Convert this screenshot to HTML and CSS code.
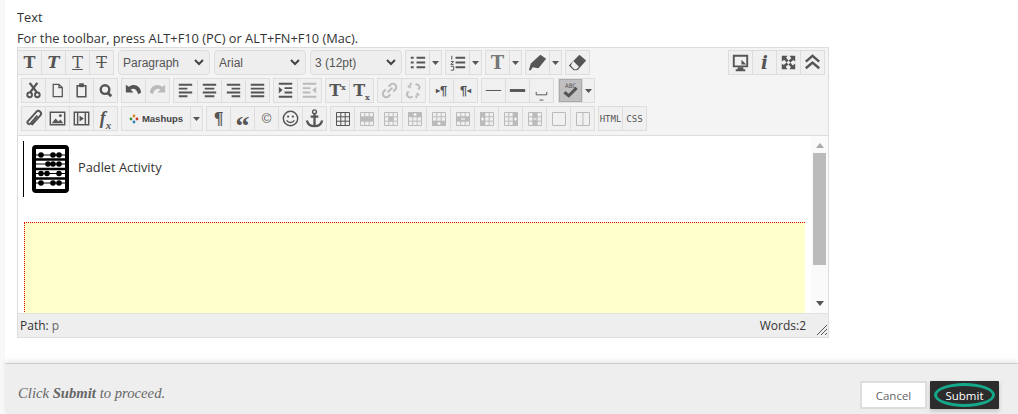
FILE: index.html
```html
<!DOCTYPE html>
<html lang="en">
<head>
<meta charset="utf-8">
<title>Text editor</title>
<link rel="stylesheet" href="styles.css">
</head>
<body>
<svg class="sprite" width="0" height="0" aria-hidden="true">
  <defs>
    <symbol id="grid" viewBox="0 0 16 16"><path d="M1.500 1.500h13v13h-13zM1.500 5.800h13M1.500 10.200h13M5.800 1.500v13M10.200 1.500v13" fill="none" stroke="currentColor"/></symbol>
    <symbol id="caret" viewBox="0 0 7 4"><path d="M0 0h7L3.500 4z" fill="currentColor"/></symbol>
    <symbol id="chev" viewBox="0 0 10 7"><path d="M1 1l4 4 4-4" fill="none" stroke="currentColor" stroke-width="2"/></symbol>
  </defs>
</svg>
<main class="main">
  <p class="label">Text</p>
  <p class="hint">For the toolbar, press ALT+F10 (PC) or ALT+FN+F10 (Mac).</p>
  <section class="editor">
    <div class="toolbar">
      <div class="row row-first">
        <div class="group group-start">
          <span class="cell glyph bold">T</span>
          <span class="cell glyph bold ital">T</span>
          <span class="cell glyph uline">T</span>
          <span class="cell glyph strike">T</span>
        </div>
        <div class="select"><span>Paragraph</span><svg class="chev"><use href="#chev"/></svg></div>
        <div class="select"><span>Arial</span><svg class="chev"><use href="#chev"/></svg></div>
        <div class="select"><span>3 (12pt)</span><svg class="chev"><use href="#chev"/></svg></div>
        <div class="group">
          <span class="cell"><svg class="ico" viewBox="0 0 24 24"><path d="M5 7h3M11 7h9M5 12h3M11 12h9M5 17h3M11 17h9" stroke="currentColor" stroke-width="2"/></svg></span>
          <span class="cell caret"><svg class="car"><use href="#caret"/></svg></span>
        </div>
        <div class="group">
          <span class="cell"><svg class="ico" viewBox="0 0 24 24"><path d="M10 7h10M10 12h10M10 17h10" stroke="currentColor" stroke-width="2"/><path d="M6 5v4M5 11h3l-3 3h3M5 16h3v4H5" fill="none" stroke="currentColor"/></svg></span>
          <span class="cell caret"><svg class="car"><use href="#caret"/></svg></span>
        </div>
        <div class="group">
          <span class="cell glyph bold big muted">T</span>
          <span class="cell caret"><svg class="car"><use href="#caret"/></svg></span>
        </div>
        <div class="group">
          <span class="cell"><svg class="ico" viewBox="0 0 24 24"><path d="M15 4l6 4-8 10-6-1-2 3H3l2-7z" fill="currentColor"/></svg></span>
          <span class="cell caret"><svg class="car"><use href="#caret"/></svg></span>
        </div>
        <div class="group">
          <span class="cell"><svg class="ico" viewBox="0 0 24 24"><path d="M14 4l7 6-9 10H8l-5-5z" fill="currentColor"/><path d="M7.500 10.500l6 6-2.500 2.500H8.500L5 15z" fill="#f0f0f0"/></svg></span>
        </div>
        <div class="group group-end">
          <span class="cell"><svg class="ico" viewBox="0 0 24 24"><path d="M5 5h14v11H5z" fill="none" stroke="currentColor" stroke-width="2"/><path d="M13 9l5 5h-5zM9 17h6v2h2v2H7v-2h2z" fill="currentColor"/></svg></span>
          <span class="cell glyph info">i</span>
          <span class="cell"><svg class="ico" viewBox="0 0 24 24"><path d="M5 5h6L9.500 7 12 10l-2 2-2.500-3L5 11zM19 5v6L17 9.500 14 12l-2-2 3-2.500L13 5zM5 19v-6L7 14.500 10 12l2 2-3 2.500L11 19zM19 19h-6L14.500 17 12 14l2-2 2.500 3L19 13z" fill="currentColor"/></svg></span>
          <span class="cell"><svg class="ico" viewBox="0 0 24 24"><path d="M5 11l7-6 7 6M5 18l7-6 7 6" fill="none" stroke="currentColor" stroke-width="2.500"/></svg></span>
        </div>
      </div>
      <div class="row">
        <div class="group">
          <span class="cell"><svg class="ico" viewBox="0 0 24 24"><path d="M8 4l7.500 10M16 4L8.500 14" stroke="currentColor" stroke-width="2.400"/><circle cx="8" cy="16.500" r="2.500" fill="none" stroke="currentColor" stroke-width="2"/><circle cx="16" cy="16.500" r="2.500" fill="none" stroke="currentColor" stroke-width="2"/></svg></span>
          <span class="cell"><svg class="ico" viewBox="0 0 24 24"><path d="M7.500 5.500h6l3.500 3.500v9.500H7.500zM13.500 5.500v3.500H17" fill="none" stroke="currentColor" stroke-width="1.300"/></svg></span>
          <span class="cell"><svg class="ico" viewBox="0 0 24 24"><path d="M7.500 7h9v11.500h-9z" fill="none" stroke="currentColor" stroke-width="1.600"/><path d="M9.500 4.500h5v4h-5z" fill="currentColor"/></svg></span>
          <span class="cell"><svg class="ico" viewBox="0 0 24 24"><circle cx="11.500" cy="11" r="4.500" fill="none" stroke="currentColor" stroke-width="2.500"/><path d="M14 14l4 4" stroke="currentColor" stroke-width="3"/></svg></span>
        </div>
        <div class="group">
          <span class="cell"><svg class="ico" viewBox="0 0 24 24"><path d="M4 6v8h8l-3-3c3-2 6-1 8 5l3-2c-1-7-7-10-13-6l-3-2z" fill="currentColor"/></svg></span>
          <span class="cell off"><svg class="ico" viewBox="0 0 24 24"><path d="M20 6v8h-8l3-3c-3-2-6-1-8 5l-3-2c1-7 7-10 13-6l3-2z" fill="currentColor"/></svg></span>
        </div>
        <div class="group">
          <span class="cell"><svg class="ico" viewBox="0 0 24 24"><path d="M5 6h14M5 10h9M5 14h14M5 18h9" stroke="currentColor" stroke-width="2"/></svg></span>
          <span class="cell"><svg class="ico" viewBox="0 0 24 24"><path d="M5 6h14M7 10h10M5 14h14M7 18h10" stroke="currentColor" stroke-width="2"/></svg></span>
          <span class="cell"><svg class="ico" viewBox="0 0 24 24"><path d="M5 6h14M10 10h9M5 14h14M10 18h9" stroke="currentColor" stroke-width="2"/></svg></span>
          <span class="cell"><svg class="ico" viewBox="0 0 24 24"><path d="M5 6h14M5 10h14M5 14h14M5 18h14" stroke="currentColor" stroke-width="2"/></svg></span>
        </div>
        <div class="group">
          <span class="cell"><svg class="ico" viewBox="0 0 24 24"><path d="M5 5h14M11 9.500h8M11 14h8M5 18.500h14" stroke="currentColor" stroke-width="2"/><path d="M5 8l4 3.500L5 15z" fill="currentColor"/></svg></span>
          <span class="cell off"><svg class="ico" viewBox="0 0 24 24"><path d="M5 5h14M5 9.500h8M5 14h8M5 18.500h14" stroke="currentColor" stroke-width="2"/><path d="M19 8l-4 3.500 4 3.500z" fill="currentColor"/></svg></span>
        </div>
        <div class="group">
          <span class="cell glyph bold script"><span>T<sup>x</sup></span></span>
          <span class="cell glyph bold script"><span>T<sub>x</sub></span></span>
        </div>
        <div class="group">
          <span class="cell off"><svg class="ico" viewBox="0 0 24 24"><path d="M10 14l5-5M8 11l-2 2a3.500 3.500 0 0 0 5 5l2-2M11 8l2-2a3.500 3.500 0 0 1 5 5l-2 2" fill="none" stroke="currentColor" stroke-width="2"/></svg></span>
          <span class="cell off"><svg class="ico" viewBox="0 0 24 24"><path d="M7 13l-1 1a3 3 0 0 0 5 4M17 11l1-1a3 3 0 0 0-4-4M6 7l3 2M9 4v3M18 17l-3-2M15 20v-3" fill="none" stroke="currentColor" stroke-width="2"/></svg></span>
        </div>
        <div class="group">
          <span class="cell glyph para"><i class="tri">&#9656;</i>&para;</span>
          <span class="cell glyph para">&para;<i class="tri">&#9666;</i></span>
        </div>
        <div class="group">
          <span class="cell"><svg class="ico" viewBox="0 0 24 24"><path d="M4 12h16" stroke="currentColor"/></svg></span>
          <span class="cell"><svg class="ico" viewBox="0 0 24 24"><path d="M4 12h16" stroke="currentColor" stroke-width="3"/></svg></span>
          <span class="cell"><svg class="ico" viewBox="0 0 24 24"><path d="M6.500 13.500v3h11v-3" fill="none" stroke="currentColor"/><path d="M10 22h4" stroke="currentColor"/></svg></span>
        </div>
        <div class="group group-spell">
          <span class="cell on"><svg class="ico" viewBox="0 0 24 24"><text class="abc" x="12" y="9" text-anchor="middle">ABC</text><path d="M5 14l5 4 9-9" fill="none" stroke="currentColor" stroke-width="3.500"/></svg></span>
          <span class="cell caret"><svg class="car"><use href="#caret"/></svg></span>
        </div>
      </div>
      <div class="row">
        <div class="group">
          <span class="cell"><svg class="ico" viewBox="0 0 24 24"><path d="M9 19l9-10a2.600 2.600 0 0 0-4-4L5 15a1.500 1.500 0 0 0 3 2l7-8" fill="none" stroke="currentColor" stroke-width="2" transform="translate(1 0)"/></svg></span>
          <span class="cell"><svg class="ico" viewBox="0 0 24 24"><path d="M4.500 5.500h15v13h-15z" fill="none" stroke="currentColor" stroke-width="1.500"/><path d="M6 17l4-5 3 3 2-2 3 4z" fill="currentColor"/><circle cx="15" cy="9" r="1.500" fill="currentColor"/></svg></span>
          <span class="cell"><svg class="ico" viewBox="0 0 24 24"><path d="M4.500 5.500h15v13h-15zM8 5.500v13M16 5.500v13" fill="none" stroke="currentColor" stroke-width="1.500"/><path d="M10 9l4.500 3-4.500 3z" fill="currentColor"/></svg></span>
          <span class="cell glyph fx"><span><i>f</i><sub>x</sub></span></span>
        </div>
        <div class="group">
          <span class="cell mash"><svg class="mash-ico" viewBox="0 0 10 10"><circle cx="5" cy="2" r="1.400" fill="#d9822b"/><circle cx="2" cy="5" r="1.400" fill="#3b8c3b"/><circle cx="8" cy="5" r="1.400" fill="#c0392b"/><circle cx="5" cy="8" r="1.400" fill="#2c7fb8"/></svg>Mashups</span>
          <span class="cell caret"><svg class="car"><use href="#caret"/></svg></span>
        </div>
        <div class="group">
          <span class="cell glyph bold pilcrow">&para;</span>
          <span class="cell glyph bold quote">&ldquo;</span>
          <span class="cell glyph copy">&copy;</span>
          <span class="cell"><svg class="ico" viewBox="0 0 24 24"><circle cx="12" cy="12" r="7.500" fill="none" stroke="currentColor" stroke-width="1.500"/><circle cx="9.500" cy="10" r="1.200" fill="currentColor"/><circle cx="14.500" cy="10" r="1.200" fill="currentColor"/><path d="M8 14c2 3 6 3 8 0" fill="none" stroke="currentColor" stroke-width="1.500"/></svg></span>
          <span class="cell"><svg class="ico" viewBox="0 0 24 24"><circle cx="12" cy="5" r="2" fill="none" stroke="currentColor" stroke-width="1.500"/><path d="M12 7v12M8 10h8M4 14c1 4 4 6 8 6s7-2 8-6" fill="none" stroke="currentColor" stroke-width="2.400"/></svg></span>
        </div>
        <div class="group">
          <span class="cell"><svg class="tbl"><use href="#grid"/></svg></span>
          <span class="cell off"><svg class="tbl" viewBox="0 0 16 16"><use href="#grid" width="16" height="16"/><rect x="1" y="6" width="14" height="4" fill="currentColor"/></svg></span>
          <span class="cell off"><svg class="tbl" viewBox="0 0 16 16"><use href="#grid" width="16" height="16"/><rect x="6" y="6" width="4" height="4" fill="currentColor"/></svg></span>
          <span class="cell off"><svg class="tbl" viewBox="0 0 16 16"><use href="#grid" width="16" height="16"/><rect x="1" y="1" width="14" height="5" fill="currentColor"/><path d="M8 2v3M6.500 3.500h3" stroke="#fff"/></svg></span>
          <span class="cell off"><svg class="tbl" viewBox="0 0 16 16"><use href="#grid" width="16" height="16"/><rect x="1" y="10" width="14" height="5" fill="currentColor"/><path d="M8 11v3M6.500 12.500h3" stroke="#fff"/></svg></span>
          <span class="cell off"><svg class="tbl" viewBox="0 0 16 16"><use href="#grid" width="16" height="16"/><rect x="1" y="6" width="14" height="4" fill="currentColor"/><path d="M6 8h4" stroke="#fff"/></svg></span>
          <span class="cell off"><svg class="tbl" viewBox="0 0 16 16"><use href="#grid" width="16" height="16"/><rect x="1" y="1" width="5" height="14" fill="currentColor"/><path d="M3.500 6.500v3M2 8h3" stroke="#fff"/></svg></span>
          <span class="cell off"><svg class="tbl" viewBox="0 0 16 16"><use href="#grid" width="16" height="16"/><rect x="10" y="1" width="5" height="14" fill="currentColor"/><path d="M12.500 6.500v3M11 8h3" stroke="#fff"/></svg></span>
          <span class="cell off"><svg class="tbl" viewBox="0 0 16 16"><use href="#grid" width="16" height="16"/><rect x="6" y="1" width="4" height="14" fill="currentColor"/><path d="M6.500 8h3" stroke="#fff"/></svg></span>
          <span class="cell off"><svg class="tbl" viewBox="0 0 16 16"><path d="M1.500 1.500h13v13h-13z" fill="none" stroke="currentColor"/></svg></span>
          <span class="cell off"><svg class="tbl" viewBox="0 0 16 16"><path d="M1.500 1.500h13v13h-13zM8 1.500v13" fill="none" stroke="currentColor"/></svg></span>
        </div>
        <div class="group">
          <span class="cell code">HTML</span>
          <span class="cell code">CSS</span>
        </div>
      </div>
    </div>
    <div class="body">
      <div class="content">
        <div class="activity">
          <svg class="abacus" viewBox="0 0 37 48">
            <rect x="2" y="2" width="33" height="44" rx="2" fill="#fff" stroke="#000" stroke-width="4"/>
            <path d="M2 14.500h33M2 24h33M2 33.500h33" stroke="#000" stroke-width="2.500"/>
            <path d="M2 10h33M2 19h33M2 28.500h33M2 38h33" stroke="#000"/>
            <g fill="#000">
              <circle cx="9" cy="10" r="2.800"/><circle cx="21" cy="10" r="2.800"/><circle cx="27" cy="10" r="2.800"/>
              <circle cx="16" cy="19" r="2.800"/><circle cx="21" cy="19" r="2.800"/><circle cx="27" cy="19" r="2.800"/>
              <circle cx="9" cy="28.500" r="2.800"/><circle cx="15" cy="28.500" r="2.800"/><circle cx="27" cy="28.500" r="2.800"/>
              <circle cx="9" cy="38" r="2.800"/><circle cx="21" cy="38" r="2.800"/><circle cx="27" cy="38" r="2.800"/>
            </g>
          </svg>
          <span class="activity-name">Padlet Activity</span>
        </div>
        <div class="placeholder"></div>
      </div>
      <div class="scrollbar">
        <span class="arrow-up"></span>
        <span class="thumb"></span>
        <span class="arrow-down"></span>
      </div>
    </div>
    <div class="status">
      <span class="path">Path: <span class="path-val">p</span></span>
      <span class="words">Words:2</span>
      <svg class="grip" viewBox="0 0 12 12"><path d="M11 1L1 11M11 5l-6 6M11 9l-2 2" stroke="#555" fill="none"/></svg>
    </div>
  </section>
</main>
<footer class="footer">
  <p class="proceed">Click <b>Submit</b> to proceed.</p>
  <div class="actions">
    <button class="btn cancel" type="button">Cancel</button>
    <button class="btn submit" type="button"><span class="focus">Submit</span></button>
  </div>
</footer>
</body>
</html>
```

FILE: styles.css
```css
* { box-sizing: border-box; }
html, body { margin: 0; height: 100%; }
body {
  background: #f8f8f8;
  font-family: "Open Sans", sans-serif;
  color: #333;
  overflow: hidden;
  display: flex;
  flex-direction: column;
  height: 414px;
  padding-left: 5px;
}
.sprite { position: absolute; }
.main { background: #fff; flex: 1; padding: 7px 0 0 12px; min-height: 0; }
.label, .hint { margin: 0; font-size: 12.800px; color: #333; }
.label { line-height: 21px; }
.hint { line-height: 20px; height: 19px; }
.editor { width: 812px; border: 1px solid #ddd; }
.toolbar { background: #f4f4f4; border-bottom: 1px solid #ddd; height: 88px; padding-top: 2px; }
.row { display: flex; gap: 3px; height: 25px; margin-bottom: 3px; padding-left: 3px; }
.row-first { padding-left: 0; padding-right: 3px; }
.group { display: flex; border: 1px solid #ddd; background: #f0f0f0; height: 25px; }
.group-start { margin-left: -1px; margin-right: 1px; }
.group-end { margin-left: auto; }
.group-spell { margin-left: 1px; }
.cell {
  width: 24px; height: 23px; flex: none;
  display: flex; align-items: center; justify-content: center;
  color: #555; border-left: 1px solid #ddd;
}
.cell:first-child { border-left: 0; width: 23px; }
.cell.caret { width: 12px; }
.cell.off { color: #bbb; }
.cell.on { background: #c0c0c0; border: 1px solid #aaa; }
.ico { width: 23px; height: 23px; }
.tbl { width: 16px; height: 16px; }
.car { width: 7px; height: 4px; }
.glyph { font-family: "DejaVu Serif", serif; font-size: 16px; }
.bold { font-weight: 700; }
.big { font-size: 18px; }
.muted { color: #777; }
.ital { font-style: italic; }
.uline { text-decoration: underline; }
.strike { text-decoration: line-through; }
.info { font-style: italic; font-weight: 700; font-size: 18px; }
.script sup, .script sub { font-size: 8px; line-height: 0; }
.para { font-size: 13px; font-family: "Liberation Sans", sans-serif; font-weight: 700; }
.tri { font-style: normal; font-size: 8px; }
.fx { font-family: "Liberation Serif", serif; font-size: 18px; font-weight: 700; }
.fx sub { font-size: 11px; line-height: 0; font-style: italic; }
.pilcrow { font-size: 16px; }
.quote { font-family: "Liberation Serif", serif; font-size: 28px; padding-top: 14px; }
.copy { font-family: "Liberation Sans", sans-serif; font-size: 13px; }
.abc { font: 7px "DejaVu Sans Mono", monospace; fill: currentColor; }
.code { font: 9px "DejaVu Sans Mono", monospace; }
.cell.mash { width: 68px; font: 700 9.500px "Liberation Sans", sans-serif; color: #444; gap: 3px; }
.mash-ico { width: 10px; height: 10px; }
.select {
  display: flex; align-items: center; justify-content: space-between;
  width: 92px; height: 25px; margin-right: 1px;
  border: 1px solid #ddd; border-radius: 4px;
  background: #eee; padding: 0 5px 0 4px;
  font: 12px "Liberation Sans", sans-serif; color: #555;
}
.select:nth-of-type(4) { margin-right: 0; }
.chev { width: 10px; height: 7px; color: #444; }
.body { display: flex; height: 177px; background: #fff; }
.content { flex: 1; min-width: 0; overflow: hidden; padding: 5px 6px 0; }
.activity { display: flex; align-items: center; height: 56px; border-left: 1px solid #000; margin-left: -1px; padding-left: 8px; gap: 9px; }
.abacus { width: 37px; height: 48px; }
.activity-name { font-size: 12.800px; color: #333; margin-bottom: 4px; }
.placeholder { height: 120px; margin-top: 25px; background: #ffc; border-top: 1px dotted #d00; border-left: 1px dotted #d00; }
.scrollbar { width: 17px; background: #fafafa; display: flex; flex-direction: column; align-items: center; }
.thumb { width: 13px; height: 112px; background: #bbb; margin-top: 5px; }
.arrow-up, .arrow-down { width: 0; height: 0; border-left: 4px solid transparent; border-right: 4px solid transparent; }
.arrow-up { border-bottom: 5px solid #aaa; margin-top: 7px; }
.arrow-down { border-top: 5px solid #555; margin-top: 36px; }
.status { display: flex; align-items: center; height: 24px; background: #eee; border-top: 1px solid #e2e2e2; padding: 0 1px 0 2px; font-size: 12px; position: relative; }
.path { color: #333; }
.path-val { color: #666; }
.words { margin-left: auto; margin-right: 21px; color: #333; }
.grip { width: 12px; height: 12px; position: absolute; right: 0; bottom: 1px; }
.footer {
  height: 51px; flex: none; background: #eee; border-top: 1px solid #ccc;
  box-shadow: 0 -3px 4px rgba(0,0,0,.07);
  display: flex; align-items: flex-start; justify-content: space-between;
  padding: 0 19px 0 13px;
}
.proceed { margin: 19px 0 0; font: italic 14.700px/20px "Liberation Serif", serif; color: #666; }
.actions { display: flex; gap: 3px; margin-top: 17px; }
.btn { height: 28px; font: 11.500px "Open Sans", sans-serif; border-radius: 1px; padding: 0; }
.cancel { width: 67px; background: #fff; color: #666; border: 2px solid #ddd; }
.submit { width: 69px; background: #2c2c2c; color: #fff; border: 0; display: flex; align-items: center; justify-content: center; box-shadow: 0 2px 4px rgba(0,0,0,.2); }
.focus { width: 61px; height: 24px; border: 3px solid #14a98a; border-radius: 50%; display: flex; align-items: center; justify-content: center; }
```
